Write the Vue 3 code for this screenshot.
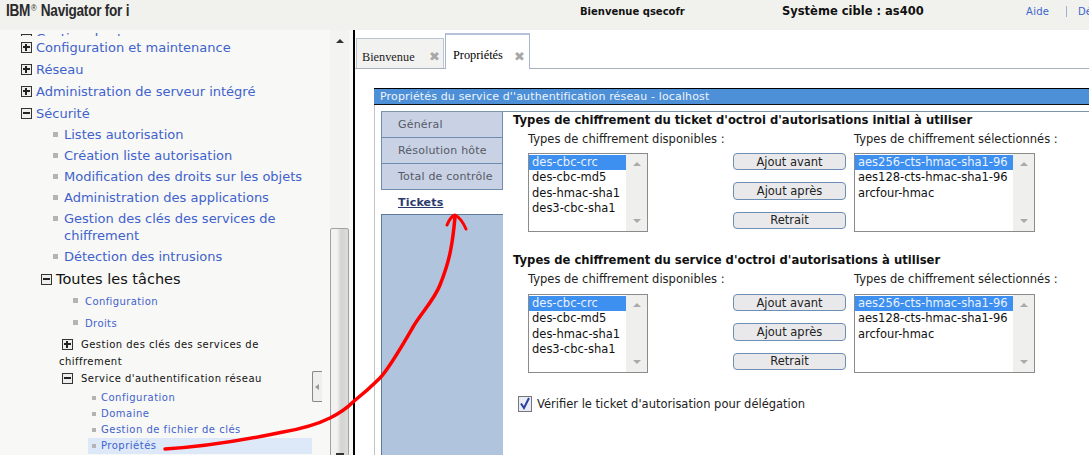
<script setup>
const topItems = [
  { label: 'Gestion des travaux', icon: 'minus', clipped: true },
  { label: 'Configuration et maintenance', icon: 'plus' },
  { label: 'Réseau', icon: 'plus' },
  { label: 'Administration de serveur intégré', icon: 'plus' },
  { label: 'Sécurité', icon: 'minus' }
]
const secItems = [
  'Listes autorisation',
  'Création liste autorisation',
  'Modification des droits sur les objets',
  'Administration des applications',
  'Gestion des clés des services de chiffrement',
  'Détection des intrusions'
]
const navs = ['Général', 'Résolution hôte', 'Total de contrôle']
const avail = ['des-cbc-crc', 'des-cbc-md5', 'des-hmac-sha1', 'des3-cbc-sha1']
const sel = ['aes256-cts-hmac-sha1-96', 'aes128-cts-hmac-sha1-96', 'arcfour-hmac']
const sections = [
  "Types de chiffrement du ticket d'octroi d'autorisations initial à utiliser",
  "Types de chiffrement du service d'octroi d'autorisations à utiliser"
]
const buttons = ['Ajout avant', 'Ajout après', 'Retrait']
</script>

<template>
  <div class="page">
    <header class="top">
      <div class="brand"><span>IBM<sup>®</sup> Navigator for i</span></div>
      <div class="welcome">Bienvenue qsecofr</div>
      <div class="target">Système cible : as400</div>
      <a class="help">Aide</a>
      <span class="sep"></span>
      <a class="logout">Déconnexion</a>
    </header>

    <div class="main">
      <aside class="side">
        <div class="tree">
          <div v-for="t in topItems" :key="t.label" class="l1" :class="{ clipped: t.clipped }">
            <span class="box" :class="t.icon"></span><a>{{ t.label }}</a>
          </div>
          <div v-for="s in secItems" :key="s" class="l2"><i class="dot"></i><a>{{ s }}</a></div>
          <div class="all"><span class="box minus"></span>Toutes les tâches</div>
          <div class="l3"><i class="dot"></i><a>Configuration</a></div>
          <div class="l3"><i class="dot"></i><a>Droits</a></div>
          <div class="grp first"><span class="box plus"></span>Gestion des clés des services de chiffrement</div>
          <div class="grp"><span class="box minus"></span>Service d'authentification réseau</div>
          <div class="l4"><i class="dot"></i><a>Configuration</a></div>
          <div class="l4"><i class="dot"></i><a>Domaine</a></div>
          <div class="l4"><i class="dot"></i><a>Gestion de fichier de clés</a></div>
          <div class="l4 cur"><i class="dot"></i><a>Propriétés</a></div>
        </div>
        <div class="sbar">
          <span class="up"></span>
          <span class="thumb"></span>
          <span class="down"></span>
        </div>
        <div class="collapse"><span></span></div>
      </aside>

      <section class="work">
        <div class="tabs">
          <div class="tab"><span>Bienvenue</span><b>✖</b></div>
          <div class="tab on"><span>Propriétés</span><b>✖</b></div>
        </div>
        <div class="panel">
          <div class="title">Propriétés du service d''authentification réseau - localhost</div>
          <div class="body">
            <nav class="nav">
              <div v-for="n in navs" :key="n" class="ni">{{ n }}</div>
              <div class="ni act">Tickets</div>
              <div class="rest"></div>
            </nav>
            <div class="content">
              <div v-for="h in sections" :key="h" class="sect">
                <h3>{{ h }}</h3>
                <div class="grid">
                  <div class="lab">Types de chiffrement disponibles :</div>
                  <div></div>
                  <div class="lab">Types de chiffrement sélectionnés :</div>
                  <div class="list small">
                    <div class="opts">
                      <div v-for="(o, i) in avail" :key="o" class="opt" :class="{ hi: i === 0 }">{{ o }}</div>
                    </div>
                    <div class="lsb"><span class="up"></span><span class="down"></span></div>
                  </div>
                  <div class="btns">
                    <button v-for="b in buttons" :key="b" type="button">{{ b }}</button>
                  </div>
                  <div class="list big">
                    <div class="opts">
                      <div v-for="(o, i) in sel" :key="o" class="opt" :class="{ hi: i === 0 }">{{ o }}</div>
                    </div>
                    <div class="lsb"><span class="up"></span><span class="down"></span></div>
                  </div>
                </div>
              </div>
              <label class="check">
                <span class="cb">
                  <svg width="14" height="15" viewBox="0 0 14 15"><path d="M3 7.5 L6 12 L11 2" fill="none" stroke="#2b3f9e" stroke-width="2"/></svg>
                </span>
                Vérifier le ticket d'autorisation pour délégation
              </label>
            </div>
          </div>
        </div>
      </section>
    </div>

    <svg class="scribble" width="1089" height="455" viewBox="0 0 1089 455">
      <path d="M165 449 C200 447 240 441 283 432 C300 429 318 424 330 418 C340 413 347 408 353 402 C363 394 372 386 380 378 C390 367 402 346 413 327 C422 312 434 300 440 285 C446 270 449 260 451 248 C453 238 454 228 455 217" fill="none" stroke="#f00" stroke-width="3.5" stroke-linecap="round"/>
      <path d="M447 225 C449 220 452 216 455 215 C459 217 463 222 466 229" fill="none" stroke="#f00" stroke-width="3" stroke-linecap="round"/>
    </svg>
  </div>
</template>

<style>
html, body { margin: 0; padding: 0; background: #fff; }
</style>

<style scoped>
.page { position: relative; width: 1089px; height: 455px; overflow: hidden; background: #fff; font-family: "DejaVu Sans", sans-serif; display: flex; flex-direction: column; }
.top { flex: 0 0 30px; height: 30px; background: #f1f1ee; display: flex; align-items: center; position: relative; white-space: nowrap; overflow: hidden; }
.top > * { flex: none; }
.brand { width: 580px; padding-left: 6px; box-sizing: border-box; font: bold 16px "Liberation Sans", sans-serif; letter-spacing: -0.3px; color: #2a2a2a; margin-top: -8px; }
.brand span { display: inline-block; transform: scaleX(0.85); transform-origin: left center; }
.brand sup { font-size: 9px; font-weight: normal; vertical-align: 5px; line-height: 0; margin: 0 1px; }
.welcome { width: 202px; font-size: 10px; font-weight: bold; color: #111; margin-top: -8px; }
.target { width: 244px; font-size: 11.5px; font-weight: bold; color: #111; margin-top: -8px; }
.help { width: 40px; font-size: 10px; letter-spacing: 0.3px; color: #3a66cc; margin-top: -8px; }
.sep { width: 1px; height: 11px; background: #9fb0cc; margin-top: -8px; margin-right: 11px; }
.logout { font-size: 10px; color: #3a66cc; margin-top: -8px; }

.main { flex: 1; display: flex; min-height: 0; }
.side { width: 355px; box-sizing: border-box; flex: none; display: flex; position: relative; background: #f8f8f6; border-right: 2px solid #000; padding-right: 4px; }
.tree { width: 330px; flex: none; overflow: hidden; color: #000; }
.tree a { color: #3f62cc; }
.box { display: inline-block; box-sizing: border-box; width: 11px; height: 11px; border: 1.5px solid #333; position: relative; background: #eee; flex: none; }
.box::before { content: ""; position: absolute; left: 1px; right: 1px; top: 3px; height: 2px; background: #222; }
.box.plus::after { content: ""; position: absolute; top: 1px; bottom: 1px; left: 3px; width: 2px; background: #222; }
.l1 { height: 22px; padding-left: 21px; display: flex; align-items: center; gap: 4px; font-size: 13px; white-space: nowrap; }
.l1.clipped { height: 6px; overflow: hidden; align-items: flex-end; }
.l1.clipped a { margin-bottom: -10px; }
.l1.clipped .box { margin-bottom: -9px; }
.dot { display: inline-block; width: 5px; height: 5px; background: #b4b4b4; flex: none; }
.l2 { padding: 2px 20px 2px 64px; position: relative; font-size: 13px; line-height: 17px; min-height: 17px; }
.l2 .dot { position: absolute; left: 53px; top: 8px; }
.all { padding-left: 41px; display: flex; align-items: center; gap: 4px; font-size: 14.5px; height: 24px; color: #111; }
.l3 { position: relative; padding-left: 85px; font-size: 10px; letter-spacing: 0.4px; height: 22px; line-height: 22px; }
.l3 .dot { position: absolute; left: 73px; top: 7px; }
.grp { font-size: 10px; letter-spacing: 0.47px; padding-left: 62px; line-height: 17px; padding-right: 58px; color: #111; }
.grp .box { margin-right: 8px; vertical-align: -2px; }
.grp.first { padding-left: 59px; margin-top: 1px; text-indent: 3px; }
.grp:not(.first) { margin-bottom: 3px; }
.l4 { position: relative; padding-left: 101px; font-size: 10px; letter-spacing: 0.5px; height: 16px; line-height: 16px; }
.l4 .dot { position: absolute; left: 92px; top: 6px; width: 4px; height: 4px; }
.l4.cur { background: #dde9f8; margin-left: 88px; margin-right: 18px; padding-left: 13px; }
.l4.cur .dot { left: 4px; }

.sbar { width: 19px; flex: none; position: relative; background: #f3f3f1; }
.thumb { position: absolute; left: 0; right: 0; top: 198px; bottom: -4px; box-sizing: border-box; border: 1px solid #a2a2a2; border-radius: 2px; background: linear-gradient(90deg, #f2f2f0 0 35%, #d3d3d1 60%, #dcdcda 100%); }
.up, .down { position: absolute; left: 50%; margin-left: -4px; width: 0; height: 0; border-left: 4px solid transparent; border-right: 4px solid transparent; }
.sbar .up { top: 9px; border-bottom: 4px solid #333; }
.sbar .down { bottom: 0; border-top: 2px solid #333; width: 8px; border-left: 0; border-right: 0; margin-left: -4px; }
.collapse { position: absolute; left: 312px; top: 341px; width: 10px; height: 31px; box-sizing: border-box; border: 1px solid #888; border-right: 0; border-radius: 2px 0 0 2px; background: #efefed; }
.collapse span { position: absolute; left: 2px; top: 12px; width: 0; height: 0; border-top: 3px solid transparent; border-bottom: 3px solid transparent; border-right: 4px solid #999; }

.work { flex: 1; min-width: 0; display: flex; flex-direction: column; }
.tabs { height: 39px; box-sizing: border-box; padding: 3px 0 0 1px; border-bottom: 1px solid #a9afbb; display: flex; align-items: flex-end; gap: 1px; flex: none; font: 12.3px "Liberation Serif", serif; color: #222; }
.tab { height: 30px; box-sizing: border-box; width: 88px; border: 1px solid #bcc4d2; border-bottom: 0; background: #f2f2f0; display: flex; align-items: center; padding: 8px 0 0 5px; position: relative; }
.tab b { position: absolute; left: 72px; top: 10px; color: #a8a8a8; font-size: 13px; line-height: 15px; font-family: "DejaVu Sans", sans-serif; }
.tab.on { height: 36px; width: 85px; background: #fff; border-color: #a9b4cc; color: #000; margin-bottom: -1px; padding-top: 7px; padding-left: 7px; border-top: 2px solid #b6c2d8; }
.tab.on b { left: 68px; top: 14px; }
.panel { flex: 1; margin: 19px 0 0 19px; display: flex; flex-direction: column; min-height: 0; }
.title { height: 17px; box-sizing: border-box; background: #4d90d8; border-top: 1px solid #000; border-bottom: 1px solid #111; color: #eef4fb; font-size: 11px; line-height: 15px; padding-left: 6px; letter-spacing: 0.15px; white-space: nowrap; }
.body { flex: 1; display: flex; min-height: 0; border-left: 1px solid #c4c4c4; padding: 6px 0 0 6px; }
.nav { width: 122px; flex: none; display: flex; flex-direction: column; border-top: 1px solid #7c96ae; }
.ni { height: 26px; box-sizing: border-box; background: #c9d1e4; border-right: 1px solid #6d8db0; border-bottom: 1px solid #6d8db0; border-left: 1px solid #6d8db0; color: #555a66; font-size: 11px; letter-spacing: 0.2px; line-height: 25px; padding-left: 16px; white-space: nowrap; }
.ni.act { height: 25px; background: #fff; color: #2b3a6e; font-weight: bold; text-decoration: underline; border: 0; border-bottom: 1px solid #5c7c9a; padding-left: 17px; }
.rest { flex: 1; background: #b1c4de; border-left: 1px solid #5c7c9a; }
.content { flex: 1; min-width: 0; padding-left: 10px; border-top: 1px solid #7c96ae; }
.sect { height: 140px; }
.sect + .sect { height: 142px; }
.sect + .sect .grid { grid-template-rows: 25px 79px; }
.sect h3 { margin: 0; font-size: 11.6px; line-height: 16px; font-weight: bold; color: #111; white-space: nowrap; }
.grid { display: grid; grid-template-columns: 120px 206px 181px; padding-left: 15px; margin-top: 1px; grid-template-rows: 24px 79px; align-items: start; }
.lab { font-size: 11.5px; line-height: 16px; color: #222; white-space: nowrap; padding-top: 2px; }
.list { box-sizing: border-box; height: 79px; border: 1px solid #8b8b8b; display: flex; background: #fff; font-size: 11.5px; }
.opts { flex: 1; min-width: 0; padding-top: 1px; }
.opt { height: 15.3px; line-height: 15.3px; padding-left: 3px; color: #111; white-space: nowrap; }
.opt.hi { background: #3d8ff0; color: #eaf2fd; }
.lsb { width: 21px; flex: none; position: relative; background: #efefed; }
.lsb .up { top: 8px; border-bottom: 4px solid #aaa; }
.lsb .down { bottom: 8px; border-top: 4px solid #aaa; }
.btns { display: flex; flex-direction: column; gap: 12px; padding-left: 85px; }
.btns button { width: 113px; height: 17.4px; box-sizing: border-box; padding: 1px 0 0; border: 1px solid #6d8fb5; border-radius: 4px; background: #e9e9ec; font: 11.5px "DejaVu Sans", sans-serif; line-height: 13px; color: #222; }
.check { display: flex; align-items: center; gap: 5px; font-size: 11.5px; color: #222; margin-top: 2px; margin-left: 5px; }
.cb { box-sizing: border-box; width: 14px; height: 16px; border: 1px solid #777; background: #e9edf6; display: block; }
.cb svg { display: block; margin: -1px; }
.scribble { position: absolute; left: 0; top: 0; pointer-events: none; }
</style>
